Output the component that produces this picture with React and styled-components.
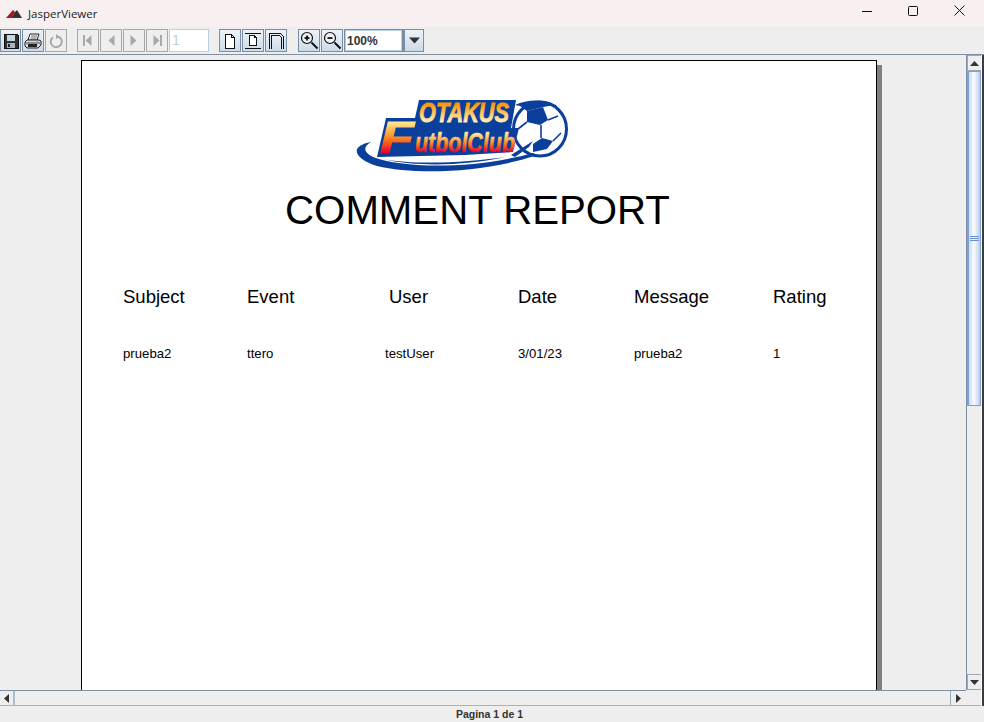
import React from 'react';
import styled, { createGlobalStyle, css } from 'styled-components';

const GlobalStyle = createGlobalStyle`
  html, body { margin: 0; padding: 0; background: #eeeeee; overflow: hidden; }
  * { box-sizing: border-box; }
`;

const Window = styled.div`
  width: 984px;
  height: 722px;
  display: flex;
  flex-direction: column;
  background: #eeeeee;
  font-family: "Liberation Sans", Arial, sans-serif;
  color: #000;
  overflow: hidden;
`;

const TitleBar = styled.div`
  height: 27px;
  flex: none;
  display: flex;
  align-items: center;
  background: #f8f0f0;
  padding-left: 6px;
`;
const AppTitle = styled.span`
  margin-left: 6px;
  font-family: "Open Sans", "Liberation Sans", sans-serif;
  font-size: 11.5px;
  color: #222;
`;
const WinControls = styled.div`
  margin-left: auto;
  display: flex;
  height: 100%;
  padding-right: 2px;
`;
const WinButton = styled.div`
  width: 46px;
  height: 100%;
  display: flex;
  align-items: center;
  justify-content: center;
  margin-top: -3px;
`;

const Toolbar = styled.div`
  height: 28px;
  flex: none;
  display: flex;
  align-items: flex-start;
  padding-top: 2px;
  background: #eeeeee;
  border-bottom: 1px solid #7d8fa1;
`;
const Group = styled.div`
  display: flex;
  margin-left: ${p => p.$left || 0}px;
  gap: 1px;
`;
const ToolButton = styled.div`
  width: ${p => p.$w || 22}px;
  height: 23px;
  display: flex;
  align-items: center;
  justify-content: center;
  border: 1px solid ${p => (p.$off ? '#a8a8a8' : '#7a8ea3')};
  ${p => !p.$off && css`
    background: linear-gradient(#eef3f8, #ccdbe9);
  `}
`;
const PageInput = styled.div`
  width: 40px;
  height: 23px;
  background: #fff;
  border: 1px solid #b8cfe5;
  color: #b8cfe5;
  font-size: 14px;
  line-height: 21px;
  padding-left: 2px;
`;
const ZoomInput = styled.div`
  width: 60px;
  height: 23px;
  margin-left: 1px;
  background: #fff;
  border: 1px solid #7a8ea3;
  border-width: 1px 2px 1px 1px;
  box-shadow: inset 0 0 0 1px #b8cfe5;
  font-size: 12px;
  font-weight: 700;
  line-height: 22px;
  padding-left: 2px;
  color: #333;
`;

const Middle = styled.div`
  flex: 1;
  min-height: 0;
  display: grid;
  grid-template-columns: 966px 15px 3px;
  grid-template-rows: 635px 16px;
`;
const Viewport = styled.div`
  overflow: hidden;
  padding: 5px 0 0 81px;
  background: #eeeeee;
`;
const Page = styled.div`
  width: 796px;
  height: 760px;
  background: #fff;
  border: 1px solid #000;
  box-shadow: 5px 5px 0 #808080;
  display: flex;
  flex-direction: column;
  padding-top: 36px;
`;
const LogoWrap = styled.div`
  display: flex;
  justify-content: center;
  padding-right: 34px;
`;
const ReportTitle = styled.h1`
  margin: 15px 0 0;
  font-size: 40.2px;
  line-height: 46px;
  font-weight: 400;
  text-align: center;
  padding-right: 3px;
`;
const ReportRow = styled.div`
  display: grid;
  grid-template-columns: 124px 138px 133px 116px 139px 1fr;
  padding-left: 41px;
  margin-top: ${p => p.$top}px;
  font-size: ${p => p.$size}px;
  line-height: ${p => Math.round(p.$size) + 4}px;
`;
const HeaderCell = styled.div`
  padding-left: ${p => p.$indent || 0}px;
`;

const VScroll = styled.div`
  border-left: 1px solid #7d8fa1;
  display: flex;
  flex-direction: column;
  background: #eeeeee;
`;
const ScrollEnd = styled.div`
  flex: none;
  width: 15px;
  height: ${p => p.$h || 15}px;
  display: flex;
  align-items: center;
  justify-content: center;
  border: 1px solid #9aa9b8;
  background: #eeeeee;
`;
const Thumb = styled.div`
  flex: none;
  height: 335px;
  display: flex;
  align-items: center;
  justify-content: center;
  flex-direction: column;
  gap: 1px;
  border: 1px solid #7d9fd6;
  border-width: 1px 1px 1px 2px;
  background: linear-gradient(90deg, #c9d9ee, #fafcff 45%, #b9cee6);
`;
const Grip = styled.i`
  width: 9px;
  height: 1px;
  background: #6d8fd0;
`;
const VFill = styled.div`
  flex: 1;
`;
const WinEdge = styled.div`
  background: linear-gradient(90deg, #fff 1px, #3b3b3f 1px);
  grid-row: 1 / span 2;
  grid-column: 3;
`;
const HScroll = styled.div`
  display: flex;
  border-top: 1px solid #7d8fa1;
  border-bottom: 1px solid #a9b3bd;
  background: #eeeeee;
`;
const HEnd = styled.div`
  width: ${p => p.$w}px;
  flex: none;
  display: flex;
  align-items: center;
  justify-content: center;
  ${p => p.$line && `border-${p.$line}: 2px solid #a7bdd6;`}
`;
const HThumb = styled.div`
  flex: 1;
  border-right: 1px solid #9aa9b8;
`;
const Corner = styled.div`
  background: #eeeeee;
  border-bottom: 1px solid #a9b3bd;
`;
const StatusBar = styled.div`
  height: 16px;
  flex: none;
  text-align: center;
  font-size: 10.5px;
  font-weight: 700;
  line-height: 16px;
  color: #333;
  padding-right: 5px;
`;

const Arrow = ({ dir = 'up', fill = '#333', size = 9 }) => {
  const pts = { up: '0,7 9,7 4.5,2', down: '0,2 9,2 4.5,7', left: '7,0 7,9 2,4.5', right: '2,0 2,9 7,4.5' }[dir];
  return (
    <svg width={size} height={size} viewBox="0 0 9 9">
      <polygon points={pts} fill={fill} />
    </svg>
  );
};

const NavIcon = ({ dir, bar }) => (
  <svg width="12" height="13" viewBox="0 0 12 13" fill="#a8a8a8">
    {dir === 'left' ? <polygon points="9.5,1 9.5,12 3.5,6.5" /> : <polygon points="2.5,1 2.5,12 8.5,6.5" />}
    {bar && (dir === 'left' ? <rect x="1" y="1" width="2" height="11" /> : <rect x="9" y="1" width="2" height="11" />)}
  </svg>
);

const SaveIcon = () => (
  <svg width="16" height="16" viewBox="0 0 16 16" shapeRendering="crispEdges">
    <path d="M1 1h13l1 1v13H1z" fill="#2c3338" stroke="#111" />
    <rect x="4" y="2" width="8" height="6" fill="#c8d6e2" />
    <rect x="4" y="10" width="8" height="5" fill="#aab4bd" />
    <rect x="5" y="11" width="2" height="3" fill="#222" />
  </svg>
);
const PrintIcon = () => (
  <svg width="18" height="16" viewBox="0 0 18 16">
    <path d="M6 1h9l-2 6H4z" fill="#fff" stroke="#222" />
    <path d="M7 3h6M6.5 5h6" stroke="#666" />
    <path d="M3 7h12l2 1v4l-3 3H3L1 13V9z" fill="#d8d8d8" stroke="#222" />
    <path d="M2 10h14" stroke="#444" />
    <rect x="4" y="11" width="9" height="3" fill="#222" />
    <rect x="12" y="8" width="2" height="1" fill="#e0c020" />
  </svg>
);
const ReloadIcon = () => (
  <svg width="14" height="14" viewBox="0 0 14 14" fill="none" stroke="#a8a8a8" strokeWidth="2">
    <path d="M4 3.2A5.5 5.5 0 1 0 9.5 2.6" />
    <polygon points="7,0 11,3 7,5" fill="#a8a8a8" stroke="none" />
  </svg>
);
const DocIcon = ({ kind }) => (
  <svg width="18" height="18" viewBox="0 0 18 18" fill="#fff" stroke="#111" shapeRendering="crispEdges">
    {kind === 'actual' && <path d="M4.5 2.5h6l3 3v11h-9zM10.5 2.5v3h3" />}
    {kind === 'width' && (
      <>
        <path d="M.5 1.5h16M.5 16.5h16" fill="none" />
        <path d="M5.5 3.5h5l2 2v8h-7zM10.5 3.5v2h2" />
      </>
    )}
    {kind === 'height' && (
      <path d="M2.5 17V1.5h11l3 3V17M4.5 17V3.5h8l2 2V17" fill="none" />
    )}
  </svg>
);
const ZoomIcon = ({ plus }) => (
  <svg width="19" height="19" viewBox="0 0 19 19">
    <circle cx="7" cy="7" r="5.5" fill="#eef3f8" stroke="#111" strokeWidth="1.2" />
    <path d="M4.5 7h5" stroke="#111" strokeWidth="1.8" />
    {plus && <path d="M7 4.5v5" stroke="#111" strokeWidth="1.8" />}
    <path d="M11.5 11.5l6 6" stroke="#111" strokeWidth="2" />
  </svg>
);

const Logo = () => (
  <svg width="214" height="76" viewBox="0 0 214 76" fontFamily="'Liberation Sans', sans-serif" fontWeight="700" fontStyle="italic">
    <defs>
      <linearGradient id="top" x1="0" y1="0" x2="0" y2="1">
        <stop offset="0.2" stopColor="#ff9600" />
        <stop offset="0.8" stopColor="#fff2c0" />
      </linearGradient>
      <linearGradient id="low" x1="0" y1="0" x2="0" y2="1">
        <stop offset="0.2" stopColor="#ffe890" />
        <stop offset="0.5" stopColor="#ff8a20" />
        <stop offset="0.8" stopColor="#e8002c" />
      </linearGradient>
    </defs>
    {/* ball */}
    <ellipse cx="185" cy="32" rx="26.5" ry="27" fill="#fff" stroke="#0b3f9c" strokeWidth="3" />
    <polygon points="172,14 188,10 193,23 185,28 172,25" fill="#0b3f9c" />
    <polygon points="178,47 187,41 198,44 192,52 178,55" fill="#0b3f9c" />
    <path d="M160 8C172 2 190 2 200 8L188 10 172 14 165 9Z" fill="#0b3f9c" />
    <path d="M193 23l10 -4M186 28v13M172 25l-9 7M198 44l8-8M200 8l7 10" stroke="#0b3f9c" strokeWidth="1.6" fill="none" />
    <path d="M156 58L178 44l-4 6L160 60Z" fill="#0b3f9c" />
    {/* swoosh under the lettering, running into the ball */}
    <path d="M2 52C5 48 10 46 16 45C8 50 8 55 18 60C50 72 120 72 178 56L182 58C130 76 60 78 22 69C8 65 0 58 2 52Z" fill="#0b3f9c" />
    <path d="M28 62C60 68 110 66 150 60C110 69 60 70 28 62Z" fill="#0b3f9c" />
    {/* solid blue behind the letters */}
    <polygon points="64,3 161,3 156,31 164,31 158,55 110,58 22,60 31,21 60,21" fill="#0b3f9c" />
    <text x="64" y="25" fontSize="27" textLength="90" lengthAdjust="spacingAndGlyphs" fill="url(#top)" stroke="url(#top)" strokeWidth="0.8">OTAKUS</text>
    <text x="25" y="56" fontSize="45" textLength="34" lengthAdjust="spacingAndGlyphs" fill="url(#low)" stroke="url(#low)" strokeWidth="1">F</text>
    <text x="60" y="55" fontSize="27" textLength="100" lengthAdjust="spacingAndGlyphs" fill="url(#low)" stroke="url(#low)" strokeWidth="0.6">utbolClub</text>
  </svg>
);

const columns = [
  { head: 'Subject', value: 'prueba2' },
  { head: 'Event', value: 'ttero' },
  { head: 'User', value: 'testUser', indent: 4 },
  { head: 'Date', value: '3/01/23' },
  { head: 'Message', value: 'prueba2' },
  { head: 'Rating', value: '1' },
];

export default function App() {
  return (
    <Window>
      <GlobalStyle />
      <TitleBar>
        <svg width="16" height="9" viewBox="0 0 16 9">
          <polygon points="0,9 7,1 9,3 5,9" fill="#b0101a" />
          <polygon points="5,9 9,3 11,1 16,9" fill="#333" />
        </svg>
        <AppTitle>JasperViewer</AppTitle>
        <WinControls>
          <WinButton>
            <svg width="10" height="10" viewBox="0 0 10 10"><path d="M0 5.5h10" stroke="#111" /></svg>
          </WinButton>
          <WinButton>
            <svg width="10" height="10" viewBox="0 0 10 10"><rect x=".5" y=".5" width="9" height="9" rx="1" fill="none" stroke="#111" /></svg>
          </WinButton>
          <WinButton>
            <svg width="11" height="11" viewBox="0 0 11 11"><path d="M.5.5l10 10M10.5.5l-10 10" stroke="#111" /></svg>
          </WinButton>
        </WinControls>
      </TitleBar>

      <Toolbar>
        <Group>
          <ToolButton $w={21}><SaveIcon /></ToolButton>
          <ToolButton><PrintIcon /></ToolButton>
          <ToolButton $off><ReloadIcon /></ToolButton>
        </Group>
        <Group $left={10}>
          <ToolButton $off><NavIcon dir="left" bar /></ToolButton>
          <ToolButton $off><NavIcon dir="left" /></ToolButton>
          <ToolButton $off><NavIcon dir="right" /></ToolButton>
          <ToolButton $off><NavIcon dir="right" bar /></ToolButton>
          <PageInput>1</PageInput>
        </Group>
        <Group $left={10}>
          <ToolButton><DocIcon kind="actual" /></ToolButton>
          <ToolButton><DocIcon kind="width" /></ToolButton>
          <ToolButton><DocIcon kind="height" /></ToolButton>
        </Group>
        <Group $left={11}>
          <ToolButton><ZoomIcon plus /></ToolButton>
          <ToolButton><ZoomIcon /></ToolButton>
        </Group>
        <ZoomInput>100%</ZoomInput>
        <ToolButton $w={20}><Arrow dir="down" size={11} /></ToolButton>
      </Toolbar>

      <Middle>
        <Viewport>
          <Page>
            <LogoWrap><Logo /></LogoWrap>
            <ReportTitle>COMMENT REPORT</ReportTitle>
            <ReportRow $top={51} $size={18.5}>
              {columns.map(c => <HeaderCell key={c.head} $indent={c.indent}>{c.head}</HeaderCell>)}
            </ReportRow>
            <ReportRow $top={37} $size={13.2}>
              {columns.map(c => <div key={c.head}>{c.value}</div>)}
            </ReportRow>
          </Page>
        </Viewport>
        <VScroll>
          <ScrollEnd $h={16}><Arrow dir="up" /></ScrollEnd>
          <Thumb><Grip /><Grip /><Grip /></Thumb>
          <VFill />
          <ScrollEnd $h={16}><Arrow dir="down" /></ScrollEnd>
        </VScroll>
        <WinEdge />
        <HScroll>
          <HEnd $w={15} $line="right"><Arrow dir="left" /></HEnd>
          <HThumb />
          <HEnd $w={15}><Arrow dir="right" /></HEnd>
        </HScroll>
        <Corner />
      </Middle>

      <StatusBar>Pagina 1 de 1</StatusBar>
    </Window>
  );
}
